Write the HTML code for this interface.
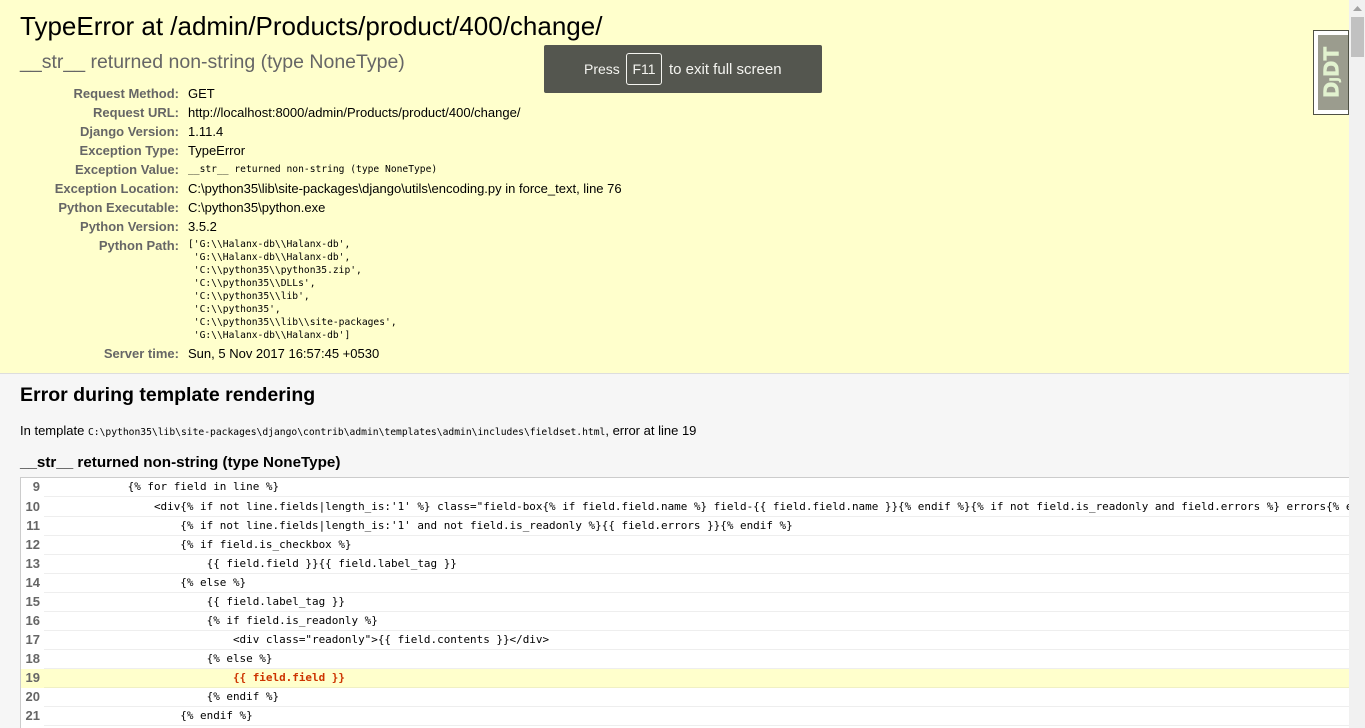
<!DOCTYPE html>
<html><head><meta charset="utf-8"><title>TypeError</title>
<style>
html,body{margin:0;padding:0;width:1365px;height:728px;overflow:hidden;background:#f6f6f6;font-family:"Liberation Sans",Arial,sans-serif;color:#000}
.a{position:absolute;white-space:pre}
#sum{position:absolute;left:0;top:0;width:1349px;height:373px;background:#ffffcc;border-bottom:1px solid #ddd}
.th{position:absolute;left:0;width:179px;text-align:right;font-size:13px;font-weight:bold;color:#666;line-height:19px;white-space:pre}
.td{position:absolute;left:188px;font-size:13px;line-height:19px;white-space:pre}
.m{font-family:"DejaVu Sans Mono","Liberation Mono",monospace}
#box{position:absolute;left:20px;top:477px;width:1329px;height:251px;background:#fff;border:1px solid #ccc;border-right:0;border-bottom:0;overflow:hidden;box-sizing:border-box}
.n{position:absolute;left:0;width:19px;text-align:right;font-size:13px;font-weight:bold;color:#666;line-height:19px}
.c{position:absolute;left:23px;right:0;height:19px;padding-left:4.6px;line-height:18px;font-size:10.95px;white-space:pre;border-bottom:1px solid #eee;box-sizing:border-box;color:#000}
.hl{position:absolute;left:0;right:0;height:19px;background:#ffffcc}
#sb{position:absolute;left:1349px;top:0;width:16px;height:728px;background:#f1f1f1}
#th{position:absolute;left:1351px;top:17px;width:13px;height:40px;background:#c1c1c1}
</style></head><body>
<div id="sum"></div>
<div class="a" style="left:20px;top:11px;font-size:26px;line-height:30px">TypeError at /admin/Products/product/400/change/</div>
<div class="a" style="left:20px;top:49px;font-size:19.5px;line-height:26px;color:#666">__str__ returned non-string (type NoneType)</div>

<div class="th" style="top:84px">Request Method:</div><div class="td" style="top:84px">GET</div>
<div class="th" style="top:103px">Request URL:</div><div class="td" style="top:103px">http://localhost:8000/admin/Products/product/400/change/</div>
<div class="th" style="top:122px">Django Version:</div><div class="td" style="top:122px">1.11.4</div>
<div class="th" style="top:141px">Exception Type:</div><div class="td" style="top:141px">TypeError</div>
<div class="th" style="top:160px">Exception Value:</div><div class="td m" style="top:160px;font-size:9.65px">__str__ returned non-string (type NoneType)</div>
<div class="th" style="top:179px">Exception Location:</div><div class="td" style="top:179px">C:\python35\lib\site-packages\django\utils\encoding.py in force_text, line 76</div>
<div class="th" style="top:198px">Python Executable:</div><div class="td" style="top:198px">C:\python35\python.exe</div>
<div class="th" style="top:217px">Python Version:</div><div class="td" style="top:217px">3.5.2</div>
<div class="th" style="top:236px">Python Path:</div>
<div class="td m" style="top:238px;font-size:9.65px;line-height:13px">['G:\\Halanx-db\\Halanx-db',
 'G:\\Halanx-db\\Halanx-db',
 'C:\\python35\\python35.zip',
 'C:\\python35\\DLLs',
 'C:\\python35\\lib',
 'C:\\python35',
 'C:\\python35\\lib\\site-packages',
 'G:\\Halanx-db\\Halanx-db']</div>
<div class="th" style="top:344px">Server time:</div><div class="td" style="top:344px">Sun, 5 Nov 2017 16:57:45 +0530</div>

<div class="a" style="left:20px;top:382px;font-size:19.55px;font-weight:bold;line-height:26px">Error during template rendering</div>
<div class="a" style="left:20px;top:421px;font-size:13px;line-height:19px">In template <span class="m" style="font-size:9.67px">C:\python35\lib\site-packages\django\contrib\admin\templates\admin\includes\fieldset.html</span>, error at line <span>19</span></div>
<div class="a" style="left:20px;top:454px;font-size:15.2px;font-weight:bold;line-height:18px">__str__ returned non-string (type NoneType)</div>

<div id="box">
<div class="hl" style="top:191px"></div>
<div class="n" style="top:-1px">9</div><div class="c m" style="top:0;height:19px">            {% for field in line %}</div>
<div class="n" style="top:19px">10</div><div class="c m" style="top:20px">                &lt;div{% if not line.fields|length_is:'1' %} class="field-box{% if field.field.name %} field-{{ field.field.name }}{% endif %}{% if not field.is_readonly and field.errors %} errors{% endif %}</div>
<div class="n" style="top:38px">11</div><div class="c m" style="top:39px">                    {% if not line.fields|length_is:'1' and not field.is_readonly %}{{ field.errors }}{% endif %}</div>
<div class="n" style="top:57px">12</div><div class="c m" style="top:58px">                    {% if field.is_checkbox %}</div>
<div class="n" style="top:76px">13</div><div class="c m" style="top:77px">                        {{ field.field }}{{ field.label_tag }}</div>
<div class="n" style="top:95px">14</div><div class="c m" style="top:96px">                    {% else %}</div>
<div class="n" style="top:114px">15</div><div class="c m" style="top:115px">                        {{ field.label_tag }}</div>
<div class="n" style="top:133px">16</div><div class="c m" style="top:134px">                        {% if field.is_readonly %}</div>
<div class="n" style="top:152px">17</div><div class="c m" style="top:153px">                            &lt;div class="readonly"&gt;{{ field.contents }}&lt;/div&gt;</div>
<div class="n" style="top:171px">18</div><div class="c m" style="top:172px">                        {% else %}</div>
<div class="n" style="top:190px">19</div><div class="c m" style="top:191px;color:#c30;font-weight:bold;border-bottom-color:#f0f0c4">                            {{ field.field }}</div>
<div class="n" style="top:209px">20</div><div class="c m" style="top:210px">                        {% endif %}</div>
<div class="n" style="top:228px">21</div><div class="c m" style="top:229px">                    {% endif %}</div>
</div>

<div id="sb"></div><div id="th"></div>
<svg class="a" style="left:1352px;top:5px" width="11" height="7"><path d="M5.5 1L10 6H1Z" fill="#a3a3a3"/></svg>

<div style="position:absolute;left:1313px;top:30px;width:36px;height:85px;box-sizing:border-box;background:#fff;border:1px solid #4f5144"></div>
<div style="position:absolute;left:1318px;top:35px;width:30px;height:75px;background:#9b9c8e"></div>
<div class="a" style="left:1302px;top:59px;width:60px;height:27px;text-align:center;line-height:27px;font-family:'DejaVu Sans',sans-serif;font-size:20px;font-weight:bold;color:#e2f2cf;transform:rotate(-90deg);-webkit-text-stroke:.4px #e2f2cf">D<span style="font-size:12px">J</span>DT</div>

<div style="position:absolute;left:544px;top:45px;width:278px;height:48px;background:#54564f;border-radius:2px"></div>
<div class="a" style="left:584px;top:60px;font-size:14px;line-height:18px;color:#f4f4f0">Press</div>
<div style="position:absolute;left:626px;top:53px;width:36px;height:32px;box-sizing:border-box;border:1px solid #f4f4f0;border-radius:3px;text-align:center;font-size:14px;line-height:30px;color:#f4f4f0">F11</div>
<div class="a" style="left:669px;top:61px;font-size:15px;line-height:18px;color:#f4f4f0">to exit full screen</div>
</body></html>
